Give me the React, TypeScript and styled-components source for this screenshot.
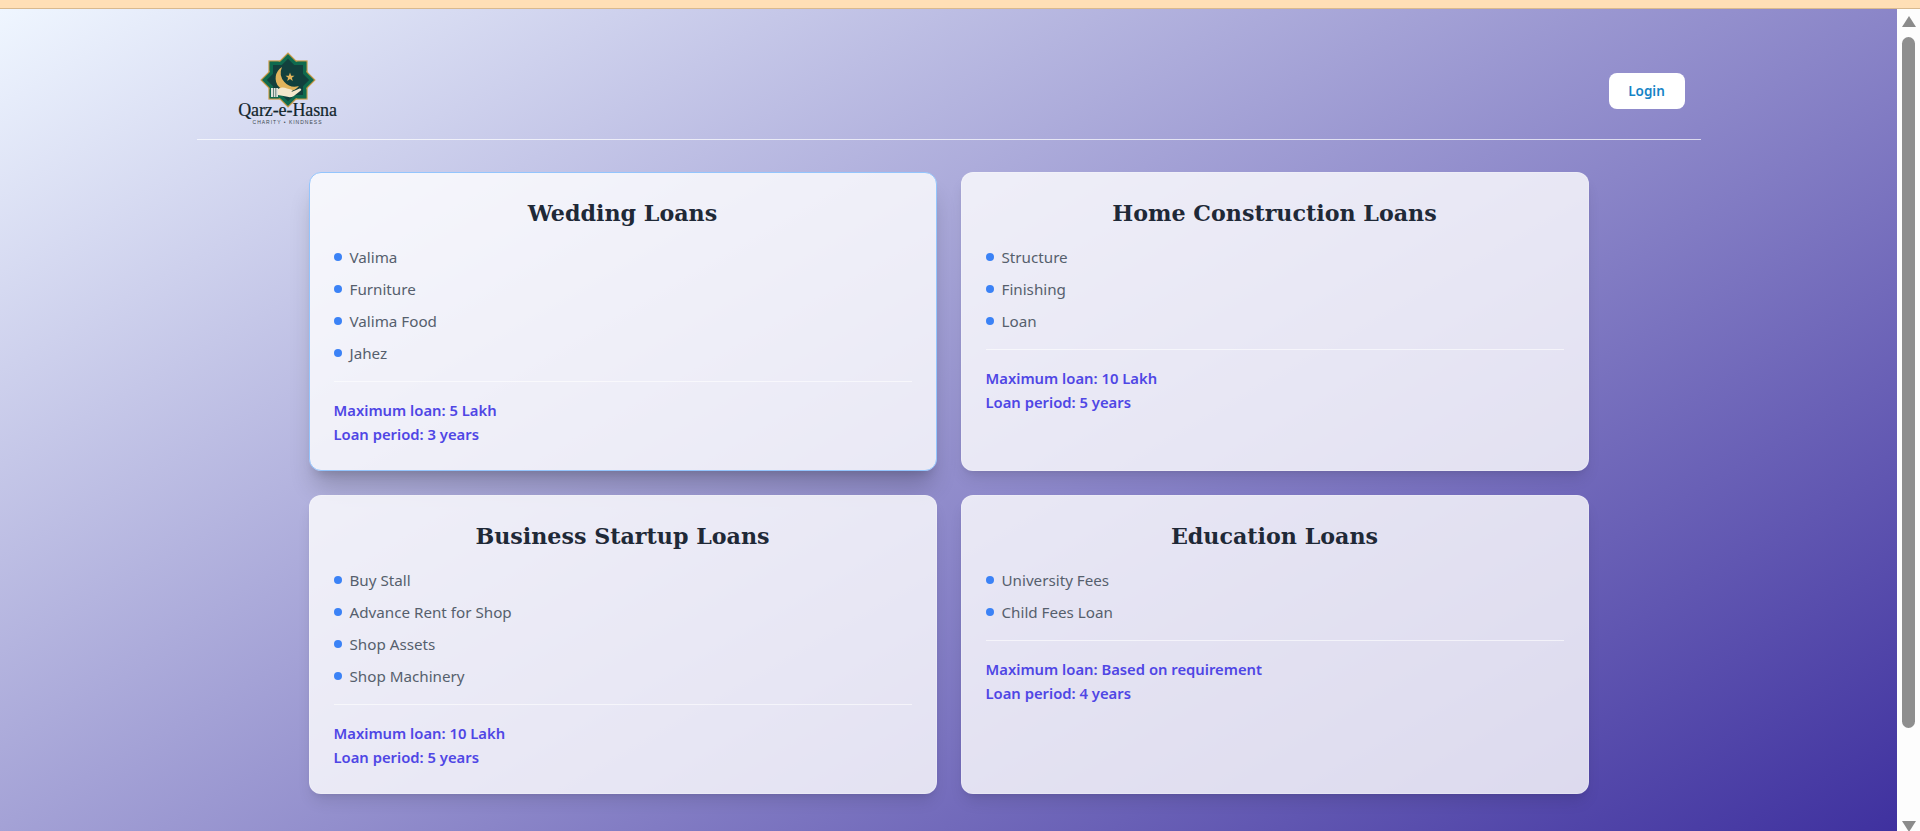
import styled, { createGlobalStyle } from 'styled-components';

const GlobalStyle = createGlobalStyle`
  html, body, #root {
    margin: 0;
    height: 100%;
    overflow: hidden;
  }
  * {
    box-sizing: border-box;
  }
  body {
    font-family: "Noto Sans", "Open Sans", sans-serif;
  }
`;

const ScWindow = styled.div`
  display: flex;
  flex-direction: column;
  height: 100vh;
`;

const ScTopStrip = styled.div`
  flex: none;
  height: 9px;
  background: #ffdfb6;
  border-bottom: 1px solid #d8b98f;
`;

const ScViewport = styled.div`
  flex: 1;
  min-height: 0;
  display: flex;
`;

const ScPage = styled.main`
  flex: 1;
  min-width: 0;
  background: linear-gradient(150deg, #eff6ff 0%, #3f319f 100%);
`;

const ScScrollbar = styled.div`
  flex: none;
  width: 23px;
  background: #fdfdfd;
  display: flex;
  flex-direction: column;
  align-items: center;
  overflow: hidden;
  padding-top: 7px;
`;

const ScArrow = styled.div<{ $down?: boolean }>`
  flex: none;
  width: 0;
  height: 0;
  border-left: 7px solid transparent;
  border-right: 7px solid transparent;
  ${(p) =>
    p.$down
      ? 'border-top: 11px solid #8b8b8b; margin-top: 93px;'
      : 'border-bottom: 11px solid #8b8b8b;'}
`;

const ScThumb = styled.div`
  flex: none;
  width: 13px;
  height: 691px;
  margin-top: 10px;
  background: #8e8e8e;
  border-radius: 7px;
`;

const ScHeader = styled.header`
  width: 1504px;
  height: 131px;
  margin: 0 auto;
  padding: 34px 16px 0 42px;
  display: flex;
  align-items: center;
  justify-content: space-between;
  border-bottom: 1px solid rgba(255, 255, 255, 0.7);
`;

const ScLogo = styled.div`
  display: flex;
  flex-direction: column;
  align-items: center;
  width: 98px;
  margin-top: -5px;
`;

const ScLogoName = styled.span`
  margin-top: -6px;
  font-family: "Liberation Serif", serif;
  font-size: 18px;
  line-height: 17px;
  letter-spacing: -0.1px;
  -webkit-text-stroke: 0.2px #12262c;
  color: #12262c;
  white-space: nowrap;
`;

const ScLogoTag = styled.span`
  font-family: "Liberation Sans", sans-serif;
  font-size: 5px;
  line-height: 6px;
  letter-spacing: 1px;
  color: #3c4a50;
  white-space: nowrap;
`;

const ScLoginButton = styled.button`
  width: 76px;
  height: 36px;
  border: 0;
  border-radius: 8px;
  background: #fff;
  color: #1583c6;
  font-family: inherit;
  font-size: 13.5px;
  font-weight: 600;
`;

const ScGrid = styled.section`
  width: 1280px;
  margin: 32px auto 0;
  display: grid;
  grid-template-columns: repeat(2, 1fr);
  grid-auto-rows: 299px;
  gap: 24px;
`;

const ScCard = styled.article<{ $active?: boolean }>`
  padding: 24px;
  border-radius: 12px;
  border: 1px solid ${(p) => (p.$active ? '#93c5fd' : 'rgba(255, 255, 255, 0.2)')};
  background: rgba(255, 255, 255, 0.8);
  box-shadow: ${(p) =>
    p.$active
      ? '0 20px 25px -5px rgba(0, 0, 0, 0.2), 0 8px 10px -6px rgba(0, 0, 0, 0.15)'
      : '0 10px 15px -3px rgba(0, 0, 0, 0.1), 0 4px 6px -4px rgba(0, 0, 0, 0.1)'};
`;

const ScTitle = styled.h2`
  margin: 0 0 12px;
  font-family: "DejaVu Serif", serif;
  font-size: 22.2px;
  line-height: 32px;
  font-weight: 700;
  text-align: center;
  color: #1f2937;
`;

const ScList = styled.ul`
  margin: 0 0 12px;
  padding: 0;
  list-style: none;
`;

const ScItem = styled.li`
  height: 32px;
  display: flex;
  align-items: center;
  gap: 8px;
  font-size: 15.2px;
  color: #565f6d;

  &::before {
    content: '';
    width: 8px;
    height: 8px;
    border-radius: 50%;
    background: #3b82f6;
  }
`;

const ScTerms = styled.div`
  padding-top: 16px;
  border-top: 1px solid rgba(255, 255, 255, 0.6);
  font-size: 14.8px;
  line-height: 24px;
  font-weight: 600;
  color: #4f46e5;
`;

const loans = [
  {
    title: 'Wedding Loans',
    items: ['Valima', 'Furniture', 'Valima Food', 'Jahez'],
    max: '5 Lakh',
    period: '3 years',
    active: true,
  },
  {
    title: 'Home Construction Loans',
    items: ['Structure', 'Finishing', 'Loan'],
    max: '10 Lakh',
    period: '5 years',
  },
  {
    title: 'Business Startup Loans',
    items: ['Buy Stall', 'Advance Rent for Shop', 'Shop Assets', 'Shop Machinery'],
    max: '10 Lakh',
    period: '5 years',
  },
  {
    title: 'Education Loans',
    items: ['University Fees', 'Child Fees Loan'],
    max: 'Based on requirement',
    period: '4 years',
  },
];

function LogoMark() {
  return (
    <svg width="56" height="56" viewBox="0 0 56 56">
      <g stroke="#c99a45" strokeWidth="1.2" fill="#0f6a4e">
        <rect x="9" y="9" width="38" height="38" />
        <rect x="9" y="9" width="38" height="38" transform="rotate(45 28 28)" />
      </g>
      <rect x="9.8" y="9.8" width="36.4" height="36.4" fill="#0f6a4e" />
      <g fill="#12403d">
        <rect x="13" y="13" width="30" height="30" />
        <rect x="13" y="13" width="30" height="30" transform="rotate(45 28 28)" />
      </g>
      <path d="M22 15A13 13 0 1 0 39 34A14 14 0 0 1 22 15z" fill="#e2b45c" />
      <path d="M30 20.5l1.2 3.2 3.3.1-2.6 2 .9 3.2-2.8-1.9-2.8 1.9.9-3.2-2.6-2 3.3-.1z" fill="#e2b45c" />
      <path d="M18 37c3-2 6-2 9-.5l4 1c2 .5 2 2 0 2.2h-4 5l7-3c2-.7 3 1 1.5 2l-7 5.5c-2 1-4 1.2-6 .6l-9.500-1.800z" fill="#f5e8cc" />
      <rect x="11" y="36" width="7" height="9" fill="#dfe3da" />
      <path d="M13.500 36v9M15.800 36v9" stroke="#12403d" strokeWidth="0.6" />
    </svg>
  );
}

function App() {
  return (
    <ScWindow>
      <GlobalStyle />
      <ScTopStrip />
      <ScViewport>
        <ScPage>
          <ScHeader>
            <ScLogo>
              <LogoMark />
              <ScLogoName>Qarz-e-Hasna</ScLogoName>
              <ScLogoTag>CHARITY • KINDNESS</ScLogoTag>
            </ScLogo>
            <ScLoginButton>Login</ScLoginButton>
          </ScHeader>
          <ScGrid>
            {loans.map((loan) => (
              <ScCard key={loan.title} $active={loan.active}>
                <ScTitle>{loan.title}</ScTitle>
                <ScList>
                  {loan.items.map((item) => (
                    <ScItem key={item}>{item}</ScItem>
                  ))}
                </ScList>
                <ScTerms>
                  <div>{`Maximum loan: ${loan.max}`}</div>
                  <div>{`Loan period: ${loan.period}`}</div>
                </ScTerms>
              </ScCard>
            ))}
          </ScGrid>
        </ScPage>
        <ScScrollbar>
          <ScArrow />
          <ScThumb />
          <ScArrow $down />
        </ScScrollbar>
      </ScViewport>
    </ScWindow>
  );
}

export default App;
